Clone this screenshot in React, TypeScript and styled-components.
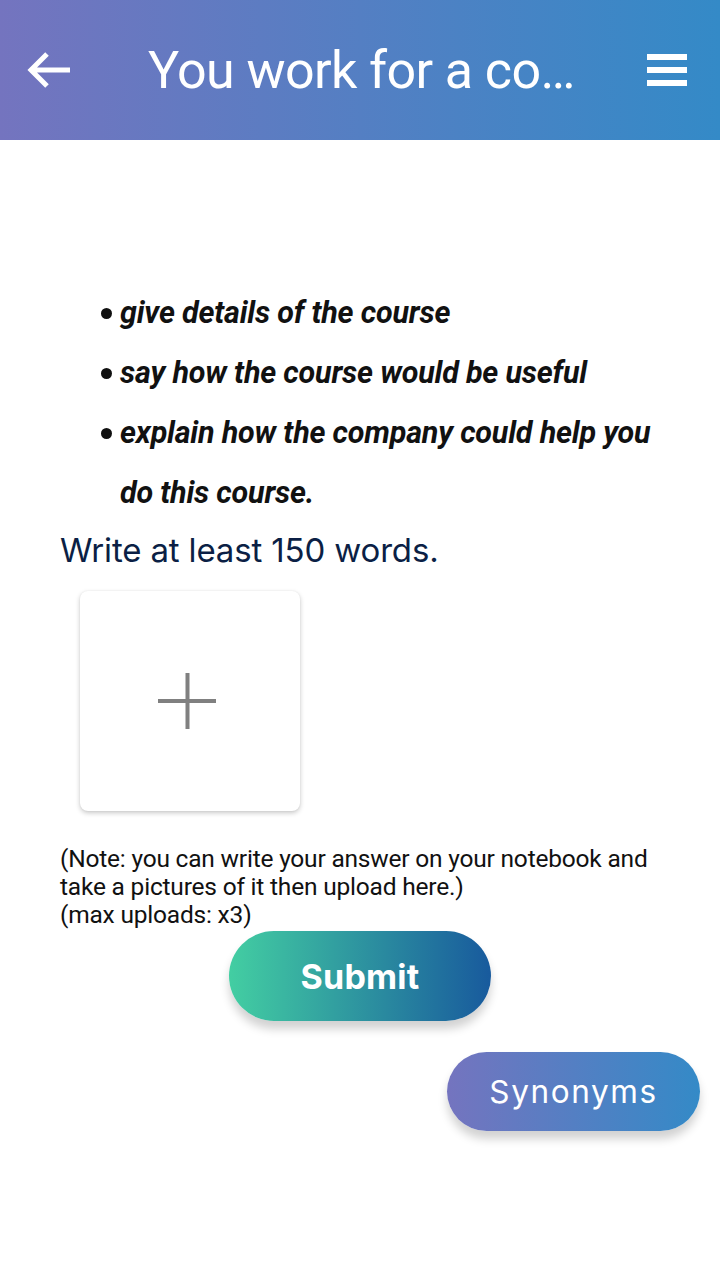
import React from "react";
import styled, { createGlobalStyle } from "styled-components";

const Global = createGlobalStyle`
  html, body { margin: 0; padding: 0; background: #fff; }
  body { font-family: Roboto, "Liberation Sans", sans-serif; }
  * { box-sizing: border-box; }
`;

const Page = styled.div`
  width: 720px;
  min-height: 1280px;
  background: #fff;
  display: flex;
  flex-direction: column;
`;

const Header = styled.header`
  height: 140px;
  background: linear-gradient(90deg, #7474bf 0%, #348ac7 100%);
  display: flex;
  align-items: center;
  padding: 0 30px 0 26px;
  color: #fff;
`;

const IconButton = styled.div`
  width: 46px;
  height: 46px;
  display: flex;
  align-items: center;
  justify-content: center;
  flex-shrink: 0;
`;

const Title = styled.h1`
  flex: 1;
  margin: 0 0 0 76px;
  font-family: Roboto, "Liberation Sans", sans-serif;
  font-weight: 400;
  font-size: 52px;
  letter-spacing: -0.6px;
  white-space: nowrap;
`;

const Content = styled.main`
  display: flex;
  flex-direction: column;
  padding: 143px 0 0 60px;
`;

const BulletList = styled.ul`
  list-style: none;
  margin: 0;
  padding: 0 0 0 41px;
  display: flex;
  flex-direction: column;
`;

const Bullet = styled.li<{ $plain?: boolean }>`
  position: relative;
  padding-left: 19px;
  font-family: Roboto, "Liberation Sans", sans-serif;
  font-style: italic;
  font-weight: 700;
  font-size: 30.5px;
  line-height: 60px;
  color: #111;
  letter-spacing: -0.2px;
  &::before {
    content: ${(p) => (p.$plain ? "none" : "''")};
    position: absolute;
    left: 0;
    top: 25px;
    width: 11px;
    height: 11px;
    border-radius: 50%;
    background: #111;
  }
`;

const Instruction = styled.p`
  margin: 0;
  font-family: Inter, "Noto Sans", sans-serif;
  font-size: 33px;
  font-weight: 400;
  line-height: 54px;
  color: #0b1f45;
  letter-spacing: -0.15px;
`;

const UploadCard = styled.div`
  margin: 14px 0 0 20px;
  width: 220px;
  height: 220px;
  border-radius: 8px;
  background: #fff;
  box-shadow: 0 2px 5px rgba(0, 0, 0, 0.22), 0 0 2px rgba(0, 0, 0, 0.06);
  display: flex;
  align-items: center;
  justify-content: center;
`;

const PlusIcon = styled.svg`
  margin-right: 7px;
`;

const Note = styled.p`
  margin: 34px 0 0 0;
  font-family: Roboto, "Liberation Sans", sans-serif;
  font-size: 24.5px;
  line-height: 28px;
  color: #111;
  letter-spacing: -0.2px;
`;

const ButtonRow = styled.div<{ $align: string }>`
  display: flex;
  justify-content: ${(p) => p.$align};
`;

const PillButton = styled.button<{ $from: string; $to: string; $w: number; $h: number }>`
  width: ${(p) => p.$w}px;
  height: ${(p) => p.$h}px;
  border: none;
  border-radius: 999px;
  background: linear-gradient(90deg, ${(p) => p.$from} 0%, ${(p) => p.$to} 100%);
  box-shadow: 0 8px 10px rgba(0, 0, 0, 0.18);
  color: #fff;
  display: flex;
  align-items: center;
  justify-content: center;
  cursor: pointer;
`;

const SubmitLabel = styled.span`
  font-family: Inter, "Noto Sans", sans-serif;
  font-weight: 700;
  font-size: 34px;
  letter-spacing: 0.2px;
`;

const SynLabel = styled.span`
  font-family: Inter, "Noto Sans", sans-serif;
  font-weight: 400;
  font-size: 31.5px;
  letter-spacing: 1.6px;
`;

const SubmitWrap = styled(ButtonRow)`
  margin: 2px 0 0 0;
  padding-left: 169px;
`;

const SynWrap = styled(ButtonRow)`
  margin: 31px 20px 0 0;
`;

export default function App() {
  return (
    <Page>
      <Global />
      <Header>
        <IconButton>
          <svg width="44" height="38" viewBox="0 0 44 38" fill="none">
            <path d="M43 19H5M20 3L4 19l16 16" stroke="#fff" strokeWidth="5" strokeLinecap="butt" strokeLinejoin="miter" />
          </svg>
        </IconButton>
        <Title>You work for a co…</Title>
        <IconButton>
          <svg width="40" height="32" viewBox="0 0 40 32">
            <rect x="0" y="0" width="40" height="6" fill="#fff" />
            <rect x="0" y="13" width="40" height="6" fill="#fff" />
            <rect x="0" y="26" width="40" height="6" fill="#fff" />
          </svg>
        </IconButton>
      </Header>
      <Content>
        <BulletList>
          <Bullet>give details of the course</Bullet>
          <Bullet>say how the course would be useful</Bullet>
          <Bullet>explain how the company could help you</Bullet>
          <Bullet $plain>do this course.</Bullet>
        </BulletList>
        <Instruction>Write at least 150 words.</Instruction>
        <UploadCard>
          <PlusIcon width="60" height="60" viewBox="0 0 60 60">
            <rect x="28.5" y="2" width="4" height="56" fill="#808080" />
            <rect x="1" y="28" width="58" height="4" fill="#808080" />
          </PlusIcon>
        </UploadCard>
        <Note>
          (Note: you can write your answer on your notebook and
          <br />
          take a pictures of it then upload here.)
          <br />
          (max uploads: x3)
        </Note>
        <SubmitWrap $align="flex-start">
          <PillButton $from="#43cea2" $to="#185a9d" $w={262} $h={90}>
            <SubmitLabel>Submit</SubmitLabel>
          </PillButton>
        </SubmitWrap>
        <SynWrap $align="flex-end">
          <PillButton $from="#7474bf" $to="#348ac7" $w={253} $h={79}>
            <SynLabel>Synonyms</SynLabel>
          </PillButton>
        </SynWrap>
      </Content>
    </Page>
  );
}
